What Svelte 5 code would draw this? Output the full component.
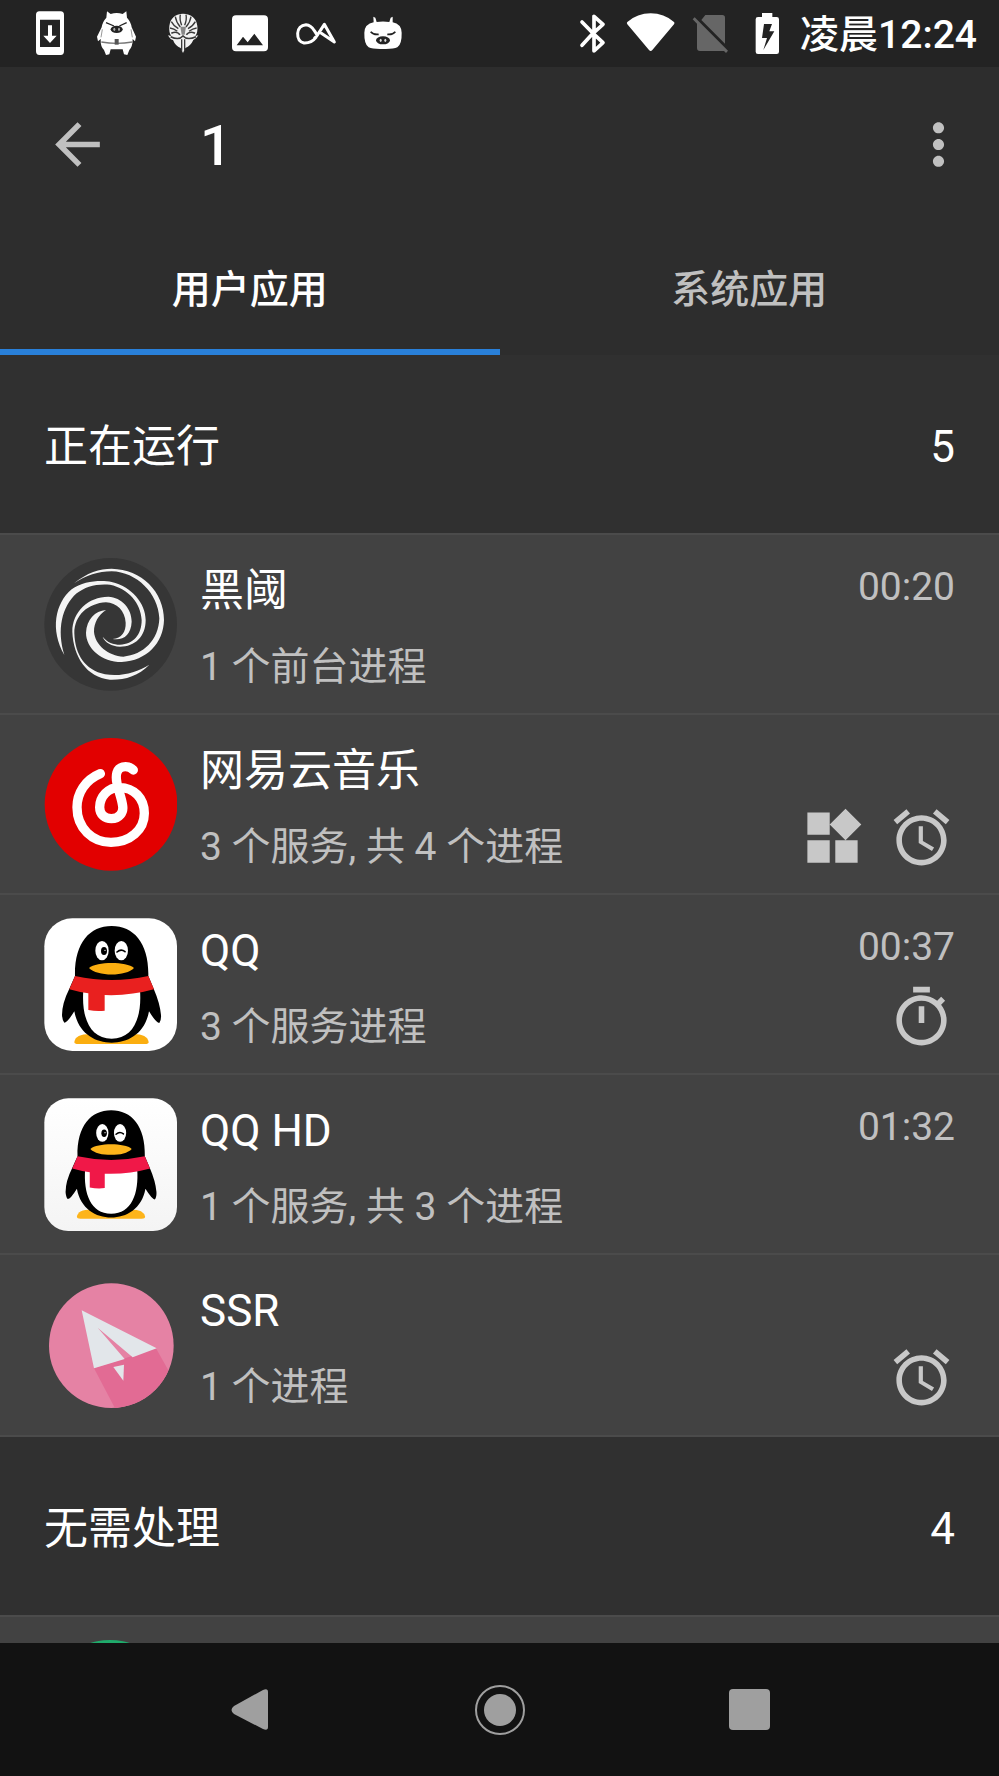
<script>
  const running = [
    { icon: 'swirl', name: '黑阈', detail: '1 个前台进程', time: '00:20', badges: [] },
    { icon: 'music', name: '网易云音乐', detail: '3 个服务, 共 4 个进程', time: '', badges: ['widgets', 'alarm'] },
    { icon: 'qq', name: 'QQ', detail: '3 个服务进程', time: '00:37', badges: ['timer'] },
    { icon: 'qqhd', name: 'QQ HD', detail: '1 个服务, 共 3 个进程', time: '01:32', badges: [] },
    { icon: 'plane', name: 'SSR', detail: '1 个进程', time: '', badges: ['alarm'] }
  ];

  const badgePaths = {
    widgets: 'M13 13v8h8v-8h-8zM3 21h8v-8H3v8zM3 3v8h8V3H3zm13.66-1.31L11 7.34 16.66 13l5.66-5.66-5.66-5.65z',
    alarm: 'M22 5.72l-4.6-3.86-1.29 1.53 4.6 3.86L22 5.72zM7.88 3.39L6.6 1.86 2 5.71l1.29 1.53 4.59-3.85zM12.5 8H11v6l4.75 2.85.75-1.23-4-2.37V8zM12 4c-4.97 0-9 4.03-9 9s4.02 9 9 9c4.97 0 9-4.03 9-9s-4.03-9-9-9zm0 16c-3.87 0-7-3.13-7-7s3.13-7 7-7 7 3.13 7 7-3.13 7-7 7z',
    timer: 'M15 1H9v2h6V1zm-4 13h2V8h-2v6zm8.03-6.61l1.42-1.42c-.43-.51-.9-.99-1.41-1.41l-1.42 1.42C16.07 4.74 14.12 4 12 4c-4.97 0-9 4.03-9 9s4.02 9 9 9 9-4.03 9-9c0-2.12-.74-4.07-1.97-5.61zM12 20c-3.87 0-7-3.13-7-7s3.13-7 7-7 7 3.13 7 7-3.13 7-7 7z'
  };

  const tabs = ['用户应用', '系统应用'];
  let active = $state(0);
</script>

{#snippet penguin(scarf, orange)}
  <path d="M133 426Q136 402 180 402H310Q352 402 356 426Q356 432 345 432H145Q133 432 133 426Z" fill={orange} />
  <path d="M118 266Q96 310 96 345Q97 362 103 368Q112 368 133 334C145 400 195 428 245 428S345 400 357 334Q378 368 388 369Q394 362 393 345Q390 310 371 266L355 228C357 130 312 78 245 78S133 130 135 228Z" fill="#000" />
  <path d="M160 270Q245 295 330 270C336 350 312 416 245 416S154 350 160 270Z" fill="#fff" />
  <path d="M135 228Q245 252 355 228L372 268Q300 288 224 285V332Q200 335 175 330V280Q145 276 118 268Z" fill={scarf} />
  <ellipse cx="216" cy="152" rx="20" ry="29" fill="#fff" />
  <ellipse cx="274" cy="152" rx="20" ry="29" fill="#fff" />
  <ellipse cx="222" cy="153" rx="9" ry="12" fill="#000" />
  <circle cx="225" cy="151" r="2" fill="#fff" />
  <path d="M261 156Q273 145 285 155" fill="none" stroke="#000" stroke-width="5" stroke-linecap="round" />
  <path d="M177 204C200 184 290 184 312 204C290 230 200 230 177 204Z" fill={orange} />
{/snippet}

{#snippet appIcon(kind)}
  {#if kind === 'swirl'}
    <svg class="app-icon" viewBox="42 54 399 399" aria-hidden="true">
      <circle cx="242" cy="253" r="199" fill="#363636" />
      <g fill="#f4f4f4">
        <path d="M132 130C170 98 210 86 245 86C335 88 402 155 402 240C400 310 350 362 275 366C215 366 168 325 168 278C170 240 195 212 228 210C205 225 192 248 192 275C195 315 235 347 280 350C340 345 386 300 388 235C385 160 320 96 245 94C205 94 168 106 132 130Z" />
        <path d="M103 345C60 270 75 190 125 148C160 122 215 120 245 126C305 140 347 190 347 240C347 290 315 320 270 320C245 318 225 308 218 290C232 308 250 314 270 314C310 312 335 285 335 240C333 190 295 145 240 134C200 130 165 140 140 160C95 200 80 270 103 345Z" />
        <path d="M358 374C325 408 285 420 240 419C170 412 130 350 127 275C127 215 175 170 235 170C275 172 305 205 305 245C303 285 280 302 248 297C275 295 288 275 287 248C285 212 260 188 228 187C175 190 133 225 133 280C135 345 165 390 225 403C275 410 320 398 358 374Z" />
      </g>
    </svg>
  {:else if kind === 'music'}
    <svg class="app-icon" viewBox="42 54 399 399" aria-hidden="true">
      <circle cx="243" cy="253" r="199" fill="#e20000" />
      <path d="M211 161C165 180 141 220 141 262C141 325 188 367 243 367C300 367 343 330 343 280C343 235 312 203 268 202C235 202 209 230 209 262C209 285 225 296 244 296C268 296 281 278 278 258C275 235 266 215 261 190C256 165 260 145 278 141C292 138 302 142 310 150" fill="none" stroke="#fff" stroke-width="28" stroke-linecap="round" stroke-linejoin="round" />
    </svg>
  {:else if kind === 'qq'}
    <svg class="app-icon" viewBox="42 54 399 399" aria-hidden="true">
      <rect x="43" y="55" width="398" height="398" rx="84" fill="#fff" />
      {@render penguin('#e9201f', '#fbae10')}
    </svg>
  {:else if kind === 'qqhd'}
    <svg class="app-icon" viewBox="42 56 399 399" aria-hidden="true">
      <defs>
        <linearGradient id="tile" x1="0" y1="0" x2="0" y2="1">
          <stop offset="0" stop-color="#fff" />
          <stop offset="1" stop-color="#f4f4f4" />
        </linearGradient>
      </defs>
      <rect x="43" y="57" width="398" height="398" rx="72" fill="url(#tile)" />
      <g transform="translate(18.6 21.4) scale(.918)">
        {@render penguin('#f01848', '#fdb41a')}
      </g>
    </svg>
  {:else if kind === 'plane'}
    <svg class="app-icon" viewBox="42 56 399 399" aria-hidden="true">
      <clipPath id="disc"><circle cx="244" cy="259" r="187" /></clipPath>
      <circle cx="244" cy="259" r="187" fill="#e582a4" />
      <path d="M192 327L378 267L430 360V460H262Z" fill="#e26b94" clip-path="url(#disc)" />
      <path d="M155 153L380 267L308 294L203 205L284 299L192 327Z" fill="#e2e6ea" />
      <path d="M250 323L282 316L280 364Z" fill="#e2e6ea" />
    </svg>
  {:else}
    <svg class="app-icon" viewBox="0 0 133 133" aria-hidden="true">
      <circle cx="66" cy="66" r="66" fill="#1fab6b" />
    </svg>
  {/if}
{/snippet}

<div class="screen">
  <div class="status">
    <div class="notices" aria-hidden="true">
      <svg viewBox="51 0 201 201">
        <path fill-rule="evenodd" d="M118 34H182Q192 34 192 45V154Q192 165 182 165H118Q108 165 108 154V45Q108 34 118 34ZM120 59V141H180V59ZM144 76H156V107H170L150 129L130 107H144Z" fill="#fff" />
      </svg>
      <svg viewBox="252 0 201 201">
        <path d="M321 34L332 42Q350 36 368 42L379 34L381 53Q393 66 395 82L408 110L405 124L398 117Q398 140 388 150L382 165L372 163L368 148H332L328 163L318 165L312 150Q301 140 302 117L294 124L291 110L305 82Q307 66 319 53Z" fill="#fff" />
        <g fill="none" stroke="#232323" stroke-width="4">
          <path d="M318 68L342 78M380 68L358 78" />
          <path d="M304 126Q350 134 397 126" stroke="#777" />
          <path d="M307 88L303 112M393 88L397 112" stroke="#999" stroke-width="3" />
        </g>
        <ellipse cx="350" cy="88" rx="18" ry="11" fill="#232323" />
        <ellipse cx="343" cy="88" rx="3" ry="5" fill="#aaa" />
        <ellipse cx="357" cy="88" rx="3" ry="5" fill="#aaa" />
        <rect x="344" y="117" width="12" height="17" fill="#555" />
      </svg>
      <svg viewBox="453 0 201 201">
        <path d="M508 78Q512 43 549 41Q588 43 592 78Q594 98 586 108L595 106Q588 118 580 120Q572 138 556 144L549 159L542 144Q526 138 519 120Q510 118 504 106L514 108Q506 98 508 78Z" fill="#f3f3f3" />
        <g fill="none" stroke="#3a3a3a" stroke-width="4">
          <path d="M541 44Q538 58 545 76M558 44Q561 58 554 76M526 50Q528 66 541 81M573 50Q571 66 558 81M514 65Q520 77 535 86M586 65Q580 77 564 86M510 84Q522 86 532 94M590 84Q578 86 567 94" />
          <path d="M514 100Q530 92 540 104M585 100Q569 92 559 104" stroke-width="5" />
          <path d="M512 110Q536 122 549 108Q562 122 588 110" stroke-width="5" />
          <path d="M545 118V152M554 118V152" stroke-width="4" />
        </g>
        <path d="M541 80H558L554 104H545Z" fill="#888" />
      </svg>
      <svg viewBox="654 0 201 201">
        <path fill-rule="evenodd" d="M708 46H792Q804 46 804 58V142Q804 154 792 154H708Q696 154 696 142V58Q696 46 708 46ZM710 136H789L763 101L743 127L729 110Z" fill="#fff" />
      </svg>
      <svg viewBox="855 0 201 201">
        <path d="M948 112Q934 130 912 129Q892 124 893 100Q895 76 918 74Q933 75 943 92L952 106M944 114Q952 108 957 98L973 73L1003 126L964 100" fill="none" stroke="#fff" stroke-width="9" stroke-linecap="round" stroke-linejoin="round" />
      </svg>
      <svg viewBox="1056 0 201 201">
        <path d="M1120 50L1126 53L1130 66Q1149 63 1168 66L1172 53L1178 50L1178 67Q1204 72 1205 98Q1206 132 1192 142Q1180 148 1149 147Q1118 148 1106 142Q1092 132 1093 98Q1094 72 1121 67Z" fill="#fff" />
        <path d="M1112 95Q1120 105 1136 103M1186 95Q1178 105 1162 103" fill="none" stroke="#232323" stroke-width="5" />
        <ellipse cx="1149" cy="121" rx="21" ry="12" fill="#232323" />
        <ellipse cx="1142" cy="121" rx="3" ry="5" fill="#ddd" />
        <ellipse cx="1156" cy="121" rx="3" ry="5" fill="#ddd" />
      </svg>
    </div>
    <div class="system">
      <svg viewBox="12 0 174 201" aria-hidden="true">
        <path d="M66 66L99 100L66 136M99 100L129 73L102 49V153L129 128Z" fill="none" stroke="#fff" stroke-width="11" stroke-linecap="round" stroke-linejoin="round" />
      </svg>
      <svg viewBox="186 0 174 201" aria-hidden="true">
        <path d="M202 66Q232 40 272 40T342 66Q345 69 342 73L277 150Q272 156 267 150L202 73Q199 69 202 66Z" fill="#fff" />
      </svg>
      <svg viewBox="360 0 174 201" aria-hidden="true">
        <path d="M436 45H487Q495 45 495 53V131L424 60ZM404 52L504 152L498 159L492 153H420Q411 153 411 144V71L398 58Z" fill="#666" />
      </svg>
      <svg viewBox="534 0 174 201" aria-hidden="true">
        <path fill-rule="evenodd" d="M606 39H637V51H650Q657 51 657 58V155Q657 162 650 162H594Q587 162 587 155V58Q587 51 594 51H606ZM612 72L606 114H621L610 150L643 94H628L636 72Z" fill="#fff" />
      </svg>
      <span class="clock">凌晨12:24</span>
    </div>
  </div>

  <header class="toolbar">
    <button class="tool" aria-label="返回">
      <svg viewBox="0 0 24 24"><path d="M20 11H7.83l5.59-5.59L12 4l-8 8 8 8 1.41-1.41L7.83 13H20v-2z" /></svg>
    </button>
    <h1>1</h1>
    <button class="tool" aria-label="更多">
      <svg viewBox="0 0 24 24"><path d="M12 8c1.1 0 2-.9 2-2s-.9-2-2-2-2 .9-2 2 .9 2 2 2zm0 2c-1.1 0-2 .9-2 2s.9 2 2 2 2-.9 2-2-.9-2-2-2zm0 6c-1.1 0-2 .9-2 2s.9 2 2 2 2-.9 2-2-.9-2-2-2z" /></svg>
    </button>
  </header>

  <div class="tabs" role="tablist">
    {#each tabs as tab, i}
      <button role="tab" class:active={active === i} aria-selected={active === i} onclick={() => (active = i)}>{tab}</button>
    {/each}
  </div>

  <main>
    <section>
      <h2><span>正在运行</span><span>5</span></h2>
      <ul>
        {#each running as app}
          <li>
            {@render appIcon(app.icon)}
            <div class="text">
              <span class="name">{app.name}</span>
              <span class="detail">{app.detail}</span>
            </div>
            <div class="meta">
              <span class="time">{app.time}</span>
              <div class="badges">
                {#each app.badges as badge}
                  <svg viewBox="0 0 24 24" aria-hidden="true"><path d={badgePaths[badge]} /></svg>
                {/each}
              </div>
            </div>
          </li>
        {/each}
      </ul>
    </section>
    <section>
      <h2><span>无需处理</span><span>4</span></h2>
      <ul>
        <li>{@render appIcon('disc')}</li>
      </ul>
    </section>
  </main>

  <nav>
    <button aria-label="后退">
      <svg viewBox="0 0 66 66"><path d="M17 29L46 13Q51 11 51 15V50Q51 54 46 52L17 37Q12 33 17 29Z" /></svg>
    </button>
    <button aria-label="主屏幕">
      <svg viewBox="0 0 66 66"><circle cx="33" cy="33" r="16" /><circle cx="33" cy="33" r="24" fill="none" stroke="#9f9f9f" stroke-width="2" /></svg>
    </button>
    <button aria-label="最近任务">
      <svg viewBox="0 0 66 66"><rect x="13" y="12" width="41" height="41" rx="4" /></svg>
    </button>
  </nav>
</div>

<style>
  :global(body) {
    margin: 0;
    background: #303030;
  }

  .screen {
    display: flex;
    flex-direction: column;
    height: 100vh;
    overflow: hidden;
    background: #303030;
    color: #fff;
    font-family: Roboto, "Noto Sans CJK SC", sans-serif;
  }

  svg {
    display: block;
    flex: none;
  }

  button {
    margin: 0;
    padding: 0;
    border: 0;
    background: none;
    color: inherit;
    font: inherit;
  }

  .status {
    display: flex;
    flex: none;
    justify-content: space-between;
    padding: 0 22px 0 17px;
    background: #232323;
  }

  .notices,
  .system {
    display: flex;
    align-items: center;
  }

  .notices svg {
    width: 67px;
    height: 67px;
  }

  .system svg {
    width: 58px;
    height: 67px;
  }

  .clock {
    margin-left: 4px;
    padding-top: 4px;
    font-size: 39px;
    font-weight: 500;
    line-height: 63px;
    white-space: nowrap;
  }

  .toolbar {
    display: flex;
    flex: none;
    align-items: center;
    height: 155px;
    padding: 0 27px 0 44px;
    background: #2d2d2d;
  }

  .tool svg {
    width: 67px;
    height: 67px;
    fill: #c0c0c0;
  }

  h1 {
    flex: 1;
    margin: 0;
    padding: 2px 0 0 89px;
    font-size: 56px;
    font-weight: 500;
    line-height: 64px;
  }

  .tabs {
    display: grid;
    flex: none;
    grid-template-columns: 1fr 1fr;
    background: #2d2d2d;
  }

  .tabs button {
    height: 133px;
    border-bottom: 6px solid transparent;
    color: #c0c0c0;
    font-size: 39px;
    font-weight: 500;
  }

  .tabs .active {
    border-bottom-color: #2980d9;
    color: #fff;
  }

  main {
    flex: 1;
    min-height: 0;
    overflow-y: auto;
    scrollbar-width: none;
  }

  h2 {
    display: flex;
    justify-content: space-between;
    margin: 0;
    padding: 6px 44px 0;
    font-size: 44px;
    font-weight: 400;
    line-height: 172px;
  }

  ul {
    margin: 0;
    padding: 0;
    border: solid #4b4b4b;
    border-width: 2px 0;
    background: #424242;
    list-style: none;
  }

  li {
    display: flex;
    padding: 23px 44px 22px;
    border-bottom: 2px solid #4b4b4b;
  }

  li:last-child {
    border-bottom-color: #424242;
  }

  .app-icon {
    width: 133px;
    height: 133px;
  }

  .text,
  .meta {
    display: flex;
    flex-direction: column;
    justify-content: space-between;
  }

  .text {
    flex: 1;
    padding-left: 23px;
  }

  .name {
    font-size: 44px;
    line-height: 66px;
  }

  .detail {
    color: #c0c0c0;
    font-size: 39px;
    line-height: 48px;
  }

  .meta {
    align-items: flex-end;
  }

  .time {
    color: #c0c0c0;
    font-size: 39px;
    line-height: 58px;
  }

  .badges {
    display: flex;
    gap: 22px;
  }

  .badges svg {
    width: 67px;
    height: 67px;
    fill: #c8c8c8;
  }

  nav {
    display: grid;
    flex: none;
    grid-template-columns: repeat(3, 1fr);
    height: 133px;
    padding: 0 12.5%;
    background: #121212;
  }

  nav button {
    display: flex;
    align-items: center;
    justify-content: center;
  }

  nav svg {
    width: 66px;
    height: 66px;
    fill: #9f9f9f;
  }
</style>
